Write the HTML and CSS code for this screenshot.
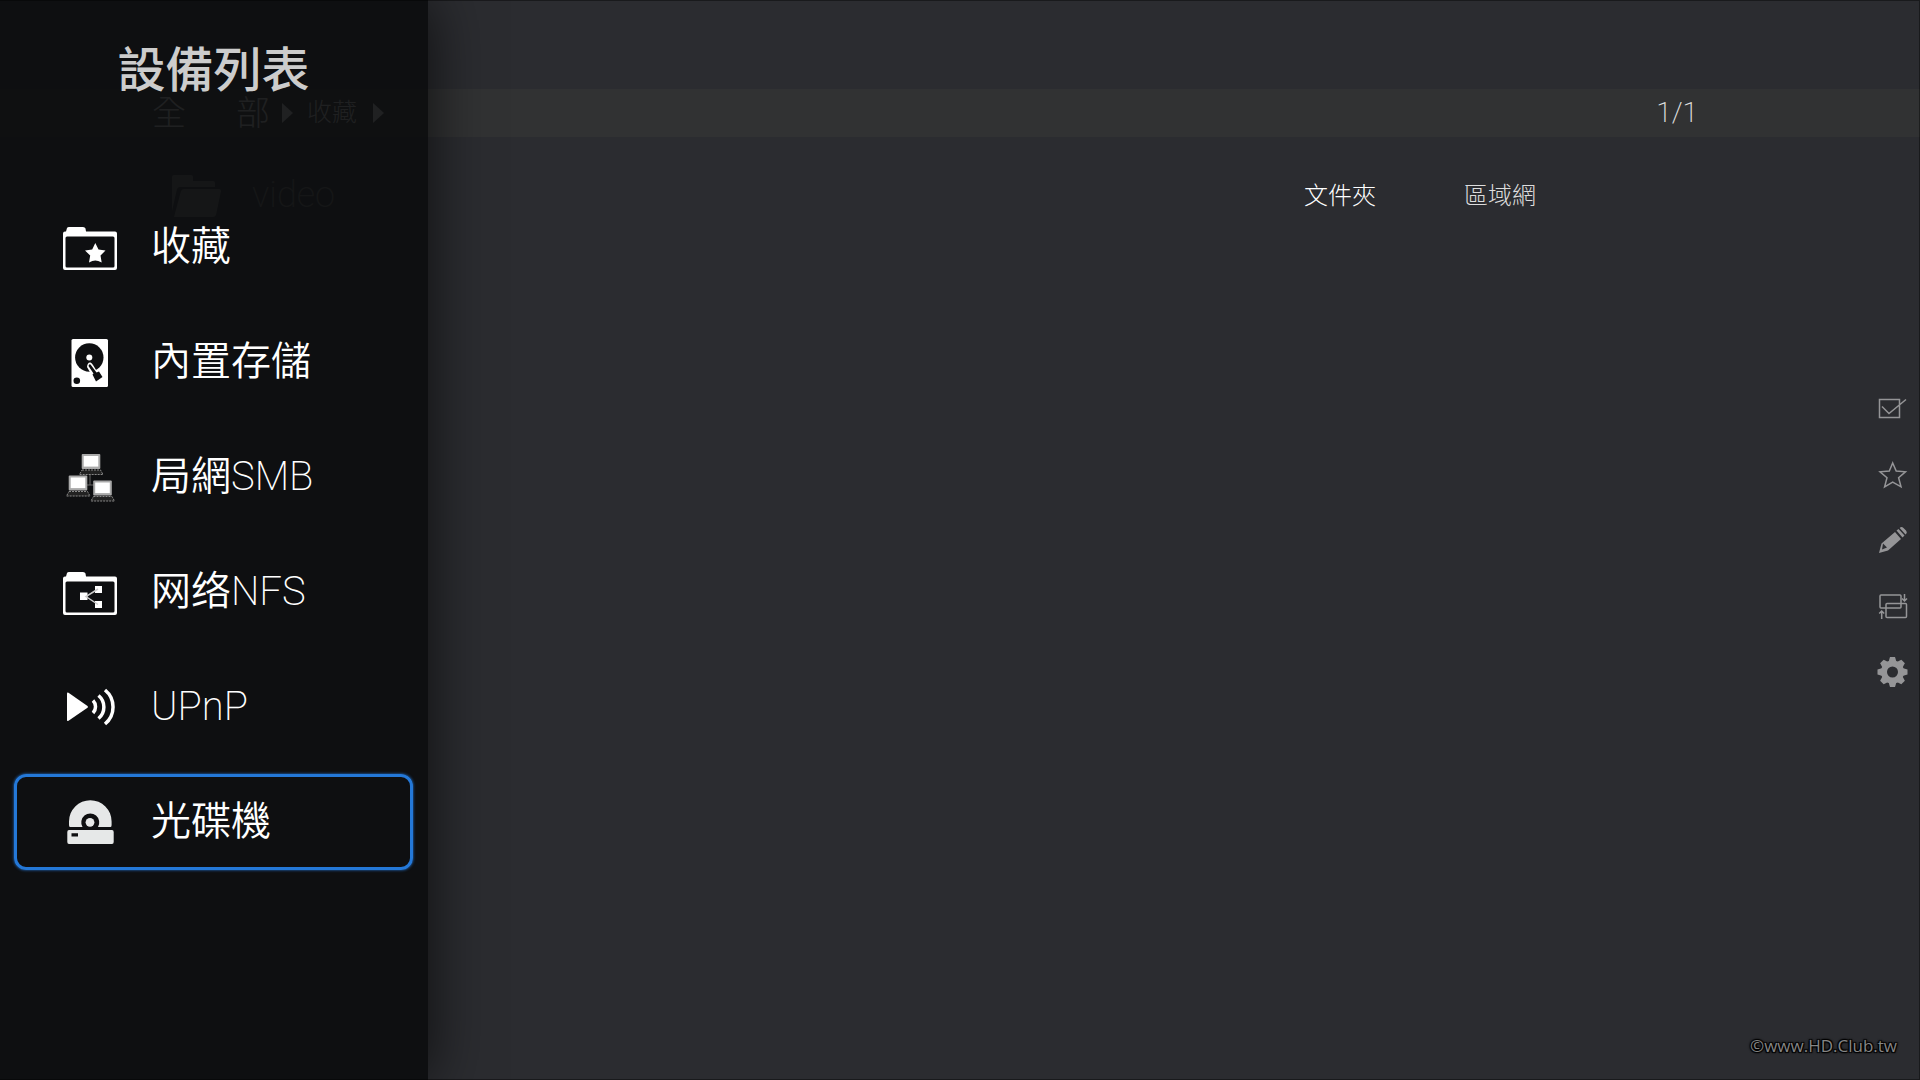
FILE: index.html
```html
<!DOCTYPE html>
<html lang="zh-Hant">
<head>
    <meta charset="UTF-8">
    <meta name="viewport" content="width=device-width, initial-scale=1.0">
    <title>設備列表</title>
    <link rel="stylesheet" href="styles.css">
</head>
<body>
    <main class="browser">
        <div class="path-bar">
            <nav class="path">
                <a href="#" class="path-root"><span>全</span><span>部</span></a>
                <span class="path-arrow"></span>
                <a href="#" class="path-item">收藏</a>
                <span class="path-arrow"></span>
            </nav>
            <span class="page-count latin">1/1</span>
        </div>
        <table class="file-list">
            <tr>
                <td class="file-name">
                    <div class="file-entry">
                        <svg class="file-icon" viewBox="0 0 50 42">
                            <path d="M0 36V2Q0 0 2 0H19Q21 0 21 2V6H41Q43 6 43 8V12H8Q6 12 5 14Z"/>
                            <path d="M9 16Q10 14 12 14H47Q49 14 49 16L44 40Q43 42 41 42H2Z"/>
                        </svg>
                        <span class="latin">video</span>
                    </div>
                </td>
                <td class="file-type">文件夾</td>
                <td class="file-source">區域網</td>
            </tr>
        </table>
    </main>

    <div class="toolbar">
        <button class="tool" aria-label="選擇">
            <svg viewBox="0 0 30 30" class="line"><path d="M2.5 6.5H22.5V24.5H2.5ZM5 13.5L12 20.5L29 6.5"/></svg>
        </button>
        <button class="tool" aria-label="收藏">
            <svg viewBox="0 0 30 30" class="line"><path d="M15.7 4L19.2 12L28.5 12.8L21.6 18.8L24 27.8L15.7 23L7.6 27.8L10 18.8L3 12.8L12.3 12Z"/></svg>
        </button>
        <button class="tool" aria-label="編輯">
            <svg viewBox="0 0 30 30"><path fill-rule="evenodd" d="M2 28L4.5 18.5L18 7L24 14L11 25.5ZM5 24.5L10 22.5L6 18.5Z"/><path d="M19.5 5.5L21.5 4L27.5 10.5L25.5 12.5ZM22.7 3L23.5 2.3Q25 1.5 26.5 3L29 5.5Q30.5 7.5 29.3 8.7L28.5 9.5Z"/></svg>
        </button>
        <button class="tool" aria-label="移動">
            <svg viewBox="0 0 30 30" class="line"><rect x="3" y="4" width="21" height="13" rx="1"/><rect x="9" y="12.5" width="20.5" height="14" rx="1"/><path d="M27.5 3V10M25 7.5L27.5 10L30 7.5M4.7 28V20M2.2 22.5L4.7 20L7.2 22.5"/></svg>
        </button>
        <button class="tool" aria-label="設定">
            <svg viewBox="0 0 30 30">
                <circle cx="15.5" cy="15" r="8.5" fill="none" stroke="currentColor" stroke-width="6"/>
                <g id="teeth">
                    <path d="M11.5 5L13 0H18L19.5 5V7H11.5Z"/>
                    <path d="M11.5 5L13 0H18L19.5 5V7H11.5Z" transform="rotate(45 15.5 15)"/>
                    <path d="M11.5 5L13 0H18L19.5 5V7H11.5Z" transform="rotate(90 15.5 15)"/>
                    <path d="M11.5 5L13 0H18L19.5 5V7H11.5Z" transform="rotate(135 15.5 15)"/>
                </g>
                <use href="#teeth" transform="rotate(180 15.5 15)"/>
            </svg>
        </button>
    </div>

    <footer class="copyright">©www.HD.Club.tw</footer>

    <aside class="drawer">
        <h1>設備列表</h1>
        <button class="device">
            <svg viewBox="0 0 56 56">
                <path fill-rule="evenodd" d="M4 12.5L5 9Q5.5 8 7 8H21Q23 8 23.5 9.5L24 12.5H53Q55 12.5 55 14.5V49Q55 51 53 51H3Q1 51 1 49V14.5Q1 12.5 3 12.5ZM5 17.5Q3.5 17.5 3.5 19V47Q3.5 48.5 5 48.5H51Q52.5 48.5 52.5 47V19Q52.5 17.5 51 17.5Z"/>
                <path d="M33.3 24L36.5 30.5L43.5 31.5L38.5 36.5L39.7 43.5Q36 41.5 33.3 41.5Q30.5 41.5 27 43.5L28.2 36.5L23 31.5L30.2 30.5Z"/>
            </svg>
            <span>收藏</span>
        </button>
        <button class="device">
            <svg viewBox="0 0 56 56">
                <rect x="9.5" y="5" width="36.5" height="48" rx="1.5"/>
                <circle class="cut" cx="27.3" cy="23.5" r="14.2"/>
                <path class="arm" d="M25 33Q25.500 28 28.500 28.500Q30 29 31 31L35 37.500L29.500 41Z"/>
                <path class="cut" d="M26.500 32Q27 29.500 28.500 30.500L34.500 38.500L37 37.500L40.500 43L34 47.500L30.500 40.500L31.500 39.500Z"/>
                <circle cx="27.3" cy="23.5" r="3"/>
                <circle class="cut" cx="14.8" cy="46.7" r="3.3"/>
            </svg>
            <span>內置存儲</span>
        </button>
        <button class="device">
            <svg viewBox="0 0 56 56">
                <path class="wire" d="M28 25V36M25 36H32"/>
                <g id="pc">
                    <rect class="case" x="19.7" y="5" width="18.6" height="15" rx="1"/>
                    <rect class="screen" x="21.7" y="7" width="14.6" height="10.6"/>
                    <path class="keys" d="M20 21H38.5L41 25.5H17.5Z"/>
                </g>
                <use href="#pc" x="-13" y="21.5"/>
                <use href="#pc" x="11.5" y="26.5"/>
            </svg>
            <span>局網<span class="latin">SMB</span></span>
        </button>
        <button class="device">
            <svg viewBox="0 0 56 56">
                <path fill-rule="evenodd" d="M4 12.5L5 9Q5.5 8 7 8H21Q23 8 23.5 9.5L24 12.5H53Q55 12.5 55 14.5V49Q55 51 53 51H3Q1 51 1 49V14.5Q1 12.5 3 12.5ZM5 17.5Q3.5 17.5 3.5 19V47Q3.5 48.5 5 48.5H51Q52.5 48.5 52.5 47V19Q52.5 17.5 51 17.5Z"/>
                <path d="M18 28.5H25.5V36H18ZM33 22H40V29H33ZM33 37H40V44H33Z"/>
                <path class="share" d="M36 25L24 32.5L36 40.5"/>
            </svg>
            <span>网络<span class="latin">NFS</span></span>
        </button>
        <button class="device">
            <svg viewBox="0 0 56 56">
                <path d="M5 14.5Q5 13 6.5 13.8L25.5 27Q26.5 28 25.5 28.8L6.5 41.7Q5 42.5 5 41Z"/>
                <path class="waves" d="M31 21.5A9 9 0 0 1 31 34M36.5 16.5A15 15 0 0 1 36.5 39.5M43 11A22 22 0 0 1 43 45"/>
            </svg>
            <span class="latin">UPnP</span>
        </button>
        <button class="device selected">
            <svg viewBox="0 0 56 56">
                <path fill-rule="evenodd" d="M8 33Q7 33 7 31V27.5A21.3 21.3 0 0 1 49.6 27.5V31Q49.6 33 48.6 33H36A9 9 0 1 0 20.5 33Z"/>
                <circle cx="28" cy="28.3" r="4.4"/>
                <path fill-rule="evenodd" d="M7 36H50Q51.7 36 51.7 38V48Q51.7 50 50 50H7Q5.3 50 5.3 48V38Q5.3 36 7 36ZM9.5 39.3V42.5H16V39.3Z"/>
            </svg>
            <span>光碟機</span>
        </button>
    </aside>
</body>
</html>
```
FILE: styles.css
```css
* {
    box-sizing: border-box;
}
body {
    margin: 0;
    min-height: 100vh;
    position: relative;
    background-color: #2b2c30;
    color: #fff;
    font-family: Roboto, "Noto Sans CJK TC", sans-serif;
    font-weight: 350;
    line-height: 1.2;
}
/* dark hairline round the screen */
body::after {
    content: "";
    position: absolute;
    inset: 0;
    border: 1px solid rgba(0, 0, 0, 0.4);
    border-left: 0;
    pointer-events: none;
}
button {
    border: 0;
    padding: 0;
    background: none;
    color: inherit;
    font: inherit;
    cursor: pointer;
}
svg {
    display: block;
    fill: currentColor;
}
.latin {
    font-weight: 200;
}
.browser {
    padding-top: 89px;
}
.path-bar {
    display: flex;
    align-items: center;
    justify-content: space-between;
    height: 48px;
    padding: 0 222px 0 152px;
    background-color: #313233;
}
.path {
    display: flex;
    align-items: center;
    color: #b0b0b0;
    font-weight: 300;
}
.path a {
    color: inherit;
    text-decoration: none;
}
.path-root {
    display: flex;
    justify-content: space-between;
    width: 118px;
    margin-right: 12px;
    font-size: 34px;
}
.path-item {
    margin: 0 16px 0 14px;
    font-size: 25px;
}
.path-arrow {
    border-left: 11px solid #b8b8b8;
    border-top: 10px solid transparent;
    border-bottom: 10px solid transparent;
}
.page-count {
    color: #e4e4e4;
    font-size: 28px;
}
.file-list {
    width: 100%;
    margin-top: 21px;
    border-collapse: collapse;
    font-weight: 300;
}
.file-list td {
    height: 76px;
    padding: 0;
    font-size: 24px;
}
.file-list .file-name {
    padding-left: 172px;
    font-size: 36px;
}
.file-entry {
    display: flex;
    align-items: center;
    gap: 30px;
    color: #666;
}
.file-icon {
    width: 50px;
    height: 42px;
}
.file-type {
    width: 160px;
}
.file-source {
    width: 456px;
    color: #ddd;
}
.toolbar {
    position: absolute;
    top: 0;
    bottom: 0;
    right: 13px;
    display: flex;
    flex-direction: column;
    justify-content: center;
    gap: 36px;
    color: #959597;
}
.tool {
    width: 30px;
    height: 30px;
}
.tool svg {
    overflow: visible;
}
.line {
    fill: none;
    stroke: currentColor;
    stroke-width: 1.5;
}
.copyright {
    position: absolute;
    right: 23px;
    bottom: 22px;
    color: #858585;
    font-family: "Open Sans", sans-serif;
    font-size: 17px;
    font-weight: 400;
    line-height: 24px;
    text-shadow: 1px 1px 1px #000, -1px -1px 1px #000, 1px -1px 1px #000, -1px 1px 1px #000, 0 0 3px #000;
}
.drawer {
    position: absolute;
    top: 0;
    bottom: 0;
    left: 0;
    width: 428px;
    padding: 43px 15px 0 14px;
    display: flex;
    flex-direction: column;
    gap: 19px;
    background-color: rgba(10, 11, 12, 0.88);
    box-shadow: 0 0 56px rgba(0, 0, 0, 0.7);
}
.drawer h1 {
    margin: 0 0 81px;
    color: #ccc;
    font-size: 48px;
    font-weight: 500;
    line-height: 56px;
    text-align: center;
}
.device {
    display: flex;
    align-items: center;
    gap: 33px;
    height: 96px;
    padding-left: 45px;
    border: 3px solid transparent;
    border-radius: 12px;
    font-size: 40px;
}
.device svg {
    width: 56px;
    height: 56px;
}
.device.selected {
    border-color: #2478d8;
    box-shadow: 0 0 3px #2478d8;
}
.selected svg {
    color: #e6e8e8;
}
.cut {
    fill: #0e0f11;
}
.arm {
    fill: #fff;
}
.wire {
    fill: none;
    stroke: #666;
}
.case {
    fill: #aaa;
}
.screen {
    fill: #fff;
}
.keys {
    fill: #222;
    stroke: #888;
    stroke-dasharray: 2 1;
}
.share {
    fill: none;
    stroke: #ccc;
    stroke-width: 1.5;
}
.waves {
    fill: none;
    stroke: currentColor;
    stroke-width: 3.5;
}
```
